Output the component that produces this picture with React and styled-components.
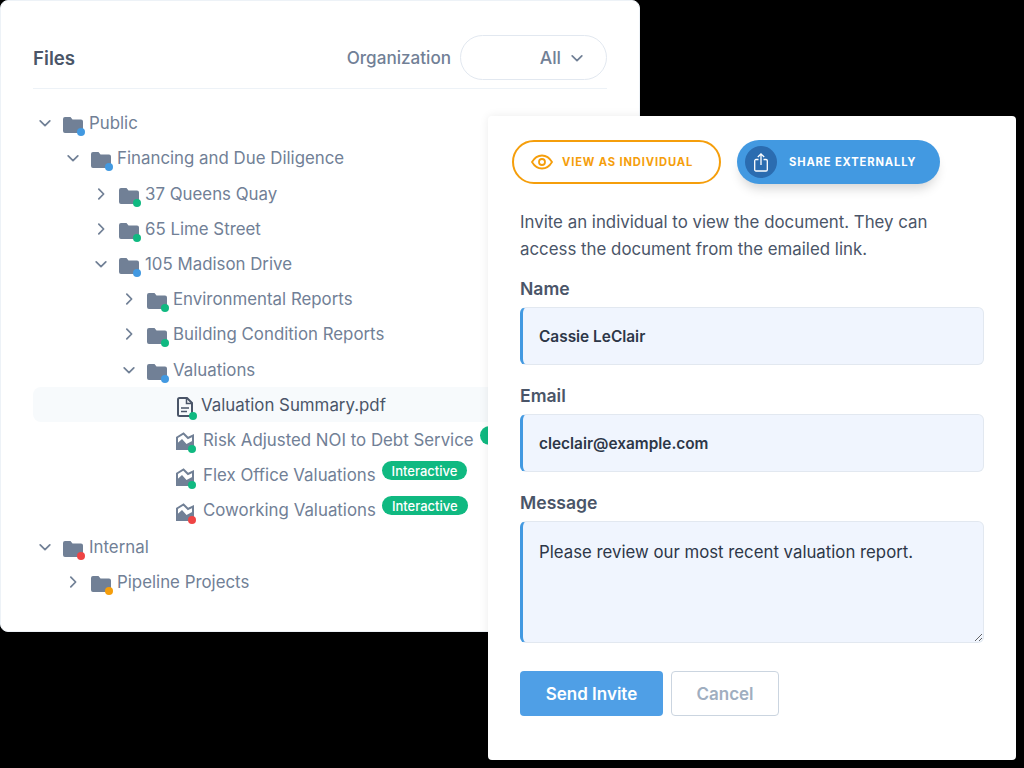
import React from "react";
import styled, { createGlobalStyle } from "styled-components";

const GlobalStyle = createGlobalStyle`
  html, body {
    margin: 0;
    padding: 0;
    background: #000;
  }
  body {
    font-family: Inter, "Liberation Sans", sans-serif;
    width: 1024px;
    height: 768px;
    overflow: hidden;
  }
`;

const BLUE = "#4299e1";
const GREEN = "#10b981";
const RED = "#ef4444";
const ORANGE = "#f59e0b";

const tree = [
  { label: "Public", level: 0, open: true, dot: BLUE },
  { label: "Financing and Due Diligence", level: 1, open: true, dot: BLUE },
  { label: "37 Queens Quay", level: 2, dot: GREEN },
  { label: "65 Lime Street", level: 2, dot: GREEN },
  { label: "105 Madison Drive", level: 2, open: true, dot: BLUE },
  { label: "Environmental Reports", level: 3, dot: GREEN },
  { label: "Building Condition Reports", level: 3, dot: GREEN },
  { label: "Valuations", level: 3, open: true, dot: BLUE },
  { label: "Valuation Summary.pdf", level: 4, kind: "doc", dot: GREEN, active: true },
  { label: "Risk Adjusted NOI to Debt Service", level: 4, kind: "chart", dot: GREEN, badge: true },
  { label: "Flex Office Valuations", level: 4, kind: "chart", dot: GREEN, badge: true },
  { label: "Coworking Valuations", level: 4, kind: "chart", dot: RED, badge: true },
  { label: "Internal", level: 0, open: true, dot: RED, gap: true },
  { label: "Pipeline Projects", level: 1, dot: ORANGE },
];

const Chevron = ({ open }) => (
  <ChevronSvg viewBox="0 0 16 16">
    <path d={open ? "M2.5 5.5 8 11l5.5-5.5" : "M5.5 2.5 11 8l-5.5 5.5"} />
  </ChevronSvg>
);

const FolderIcon = () => (
  <svg width="20" height="16" viewBox="0 0 20 16">
    <path
      fill="#718096"
      d="M2 0h5.5l2 2.5H18a2 2 0 0 1 2 2V14a2 2 0 0 1-2 2H2a2 2 0 0 1-2-2V2a2 2 0 0 1 2-2z"
    />
  </svg>
);

const DocIcon = () => (
  <svg width="16" height="20" viewBox="0 0 16 20" fill="none" stroke="#4a5568" strokeWidth="2">
    <path d="M2.5 1H10l5 5v12a1 1 0 0 1-1 1H2.5a1.5 1.5 0 0 1-1.5-1.5v-15A1.5 1.5 0 0 1 2.5 1z" />
    <path d="M9.5 1v5.500h5.500" strokeWidth="1.500" />
    <path d="M4 11h8M4 14.500h6" strokeWidth="1.600" />
  </svg>
);

const ChartIcon = () => (
  <svg width="18" height="18" viewBox="0 0 18 18">
    <path
      d="M1 17V5.500L7.500 1.500 12 6l5-2.500V17"
      fill="none"
      stroke="#718096"
      strokeWidth="2"
    />
    <path fill="#718096" d="M0 18v-5.500L6 7l4.500 5 7.500-4v10z" />
  </svg>
);

const EyeIcon = () => (
  <svg width="22" height="16" viewBox="0 0 22 16" fill="none" stroke={ORANGE} strokeWidth="1.800">
    <path d="M1 8c2.500-4.300 6-6.500 10-6.500S18.500 3.700 21 8c-2.500 4.300-6 6.500-10 6.500S3.500 12.300 1 8z" />
    <circle cx="11" cy="8" r="3" />
  </svg>
);

const ShareIcon = () => (
  <svg width="14" height="19" viewBox="0 0 14 19" fill="none" stroke="#fff" strokeWidth="1.300">
    <path d="M4.500 6.500H2a1.300 1.300 0 0 0-1.300 1.300v8.900A1.300 1.300 0 0 0 2 18h10a1.300 1.300 0 0 0 1.300-1.300V7.800A1.300 1.300 0 0 0 12 6.500H9.500" />
    <path d="M7 12V1M3.800 4 7 .9 10.200 4" />
  </svg>
);

const App = () => {
  return (
    <>
      <GlobalStyle />
      <Page>
        <FilesCard>
          <FilesHeader>
            <FilesTitle>Files</FilesTitle>
            <FilterGroup>
              <FilterLabel>Organization</FilterLabel>
              <FilterSelect>
                All
                <Chevron open />
              </FilterSelect>
            </FilterGroup>
          </FilesHeader>
          <Tree>
            {tree.map((item) => (
              <Row key={item.label} $level={item.level} $active={item.active} $gap={item.gap}>
                {item.kind ? (
                  <FileSpacer />
                ) : (
                  <ChevronSlot>
                    <Chevron open={item.open} />
                  </ChevronSlot>
                )}
                <IconWrap $kind={item.kind}>
                  {item.kind === "doc" && <DocIcon />}
                  {item.kind === "chart" && <ChartIcon />}
                  {!item.kind && <FolderIcon />}
                  <Dot $color={item.dot} $kind={item.kind} />
                </IconWrap>
                <RowLabel $active={item.active}>{item.label}</RowLabel>
                {item.badge && <Badge>Interactive</Badge>}
              </Row>
            ))}
          </Tree>
        </FilesCard>

        <ShareCard>
          <Tabs>
            <ViewTab>
              <EyeIcon />
              VIEW AS INDIVIDUAL
            </ViewTab>
            <ShareTab>
              <ShareCircle>
                <ShareIcon />
              </ShareCircle>
              SHARE EXTERNALLY
            </ShareTab>
          </Tabs>
          <Form>
            <Intro>
              Invite an individual to view the document. They can access the document from the
              emailed link.
            </Intro>
            <FieldLabel>Name</FieldLabel>
            <TextInput readOnly value="Cassie LeClair" />
            <FieldLabel>Email</FieldLabel>
            <TextInput readOnly value="cleclair@example.com" />
            <FieldLabel>Message</FieldLabel>
            <MessageInput readOnly value="Please review our most recent valuation report." />
            <Actions>
              <SendButton>Send Invite</SendButton>
              <CancelButton>Cancel</CancelButton>
            </Actions>
          </Form>
        </ShareCard>
      </Page>
    </>
  );
};

const Page = styled.div`
  position: relative;
  width: 1024px;
  height: 768px;
  background: #000;
  overflow: hidden;
`;

const FilesCard = styled.section`
  box-sizing: border-box;
  width: 640px;
  height: 632px;
  padding: 34px 32px 0;
  background: #fff;
  border: 1px solid #edf2f7;
  border-radius: 8px;
`;

const FilesHeader = styled.header`
  display: flex;
  align-items: center;
  justify-content: space-between;
  width: 574px;
  height: 54px;
  padding-bottom: 8px;
  box-sizing: border-box;
  border-bottom: 1px solid #edf2f7;
`;

const FilesTitle = styled.h2`
  margin: 1px 0 0;
  font-size: 18.7px;
  font-weight: 600;
  color: #4a5568;
`;

const FilterGroup = styled.div`
  display: flex;
  align-items: center;
  gap: 9px;
`;

const FilterLabel = styled.span`
  font-size: 17.1px;
  font-weight: 500;
  color: #718096;
`;

const FilterSelect = styled.div`
  box-sizing: border-box;
  display: flex;
  align-items: center;
  justify-content: flex-end;
  gap: 9px;
  width: 147px;
  height: 45px;
  padding-right: 22px;
  border: 1px solid #e2e8f0;
  border-radius: 23px;
  font-size: 17.6px;
  font-weight: 500;
  color: #718096;
`;

const ChevronSvg = styled.svg`
  width: 14px;
  height: 14px;
  fill: none;
  stroke: #718096;
  stroke-width: 2;
  stroke-linecap: round;
  stroke-linejoin: round;
`;

const Tree = styled.div`
  display: flex;
  flex-direction: column;
  width: 574px;
  padding-top: 16.6px;
`;

const Row = styled.div`
  display: flex;
  align-items: center;
  box-sizing: border-box;
  height: 35.2px;
  margin-top: ${(p) => (p.$gap ? "1.5px" : "0")};
  padding-left: ${(p) => p.$level * 28}px;
  background: ${(p) => (p.$active ? "#f7fafc" : "transparent")};
  border-radius: 8px;
`;

const ChevronSlot = styled.span`
  display: flex;
  align-items: center;
  justify-content: center;
  width: 24px;
  height: 24px;
  margin-right: 6px;
`;

const FileSpacer = styled.span`
  width: 30px;
  flex: none;
`;

const IconWrap = styled.span`
  position: relative;
  display: flex;
  flex: none;
  width: ${(p) => (p.$kind ? "18px" : "20px")};
  margin-left: ${(p) => (p.$kind === "doc" ? "2px" : p.$kind ? "1px" : "0")};
  margin-right: ${(p) => (p.$kind === "doc" ? "6px" : p.$kind ? "9px" : "6px")};
  margin-top: ${(p) => (p.$kind === "chart" ? "3px" : "4px")};
`;

const Dot = styled.i`
  position: absolute;
  right: -2px;
  bottom: -3px;
  width: 8px;
  height: 8px;
  border-radius: 50%;
  background: ${(p) => p.$color};
`;

const RowLabel = styled.span`
  font-size: 16.85px;
  color: ${(p) => (p.$active ? "#4a5568" : "#718096")};
  white-space: nowrap;
`;

const Badge = styled.span`
  display: flex;
  align-items: center;
  height: 19px;
  margin-left: 6px;
  margin-bottom: 9px;
  padding: 0 10px;
  border-radius: 10px;
  background: ${GREEN};
  color: #fff;
  font-size: 13px;
  font-weight: 500;
  white-space: nowrap;
`;

const ShareCard = styled.section`
  position: absolute;
  left: 488px;
  top: 116px;
  box-sizing: border-box;
  width: 528px;
  height: 644px;
  padding: 24px 32px 0 24px;
  background: #fff;
  border-radius: 4px;
  box-shadow: 0 0 10px rgba(0, 0, 0, 0.08);
`;

const Tabs = styled.div`
  display: flex;
  gap: 16px;
`;

const tabBase = `
  box-sizing: border-box;
  display: flex;
  align-items: center;
  height: 44px;
  border-radius: 22px;
  font-size: 11.2px;
  font-weight: 700;
  letter-spacing: 0.85px;
  white-space: nowrap;
`;

const ViewTab = styled.div`
  ${tabBase}
  width: 209px;
  padding-left: 17px;
  gap: 9px;
  border: 2px solid ${ORANGE};
  color: ${ORANGE};
`;

const ShareTab = styled.div`
  ${tabBase}
  width: 203px;
  padding-left: 8px;
  gap: 12px;
  background: ${BLUE};
  color: #fff;
  box-shadow: 0 8px 12px -4px rgba(0, 0, 0, 0.18);
`;

const ShareCircle = styled.span`
  display: flex;
  align-items: center;
  justify-content: center;
  width: 32px;
  height: 32px;
  border-radius: 50%;
  background: #2b6cb0;
`;

const Form = styled.div`
  display: flex;
  flex-direction: column;
  padding-left: 8px;
`;

const Intro = styled.p`
  margin: 25px 0 16px;
  font-size: 16.85px;
  line-height: 27px;
  color: #4a5568;
`;

const FieldLabel = styled.label`
  margin: 0 0 9px;
  font-size: 17.6px;
  line-height: 19px;
  font-weight: 600;
  color: #4a5568;
`;

const fieldBase = `
  box-sizing: border-box;
  width: 464px;
  padding: 0 0 0 16px;
  background: #f0f5fe;
  border: 1px solid #e2e8f0;
  border-left: 3px solid ${BLUE};
  border-radius: 6px;
  outline: none;
  font-family: Inter, "Liberation Sans", sans-serif;
  color: #2d3748;
`;

const TextInput = styled.input`
  ${fieldBase}
  height: 58px;
  margin-bottom: 21px;
  font-size: 15.4px;
  font-weight: 600;
`;

const MessageInput = styled.textarea`
  ${fieldBase}
  display: block;
  height: 122px;
  padding-top: 19px;
  font-size: 16.8px;
  line-height: 22px;
  color: #2d3748;
`;

const Actions = styled.div`
  display: flex;
  gap: 8px;
  margin-top: 28px;
`;

const actionBase = `
  box-sizing: border-box;
  height: 45px;
  border-radius: 4px;
  font-family: Inter, "Liberation Sans", sans-serif;
  font-size: 17px;
  font-weight: 600;
`;

const SendButton = styled.button`
  ${actionBase}
  width: 143px;
  border: 0;
  background: #4f9fe6;
  color: #fff;
`;

const CancelButton = styled.button`
  ${actionBase}
  width: 108px;
  border: 1px solid #cbd5e0;
  background: #fff;
  color: #a0aec0;
`;

export default App;
